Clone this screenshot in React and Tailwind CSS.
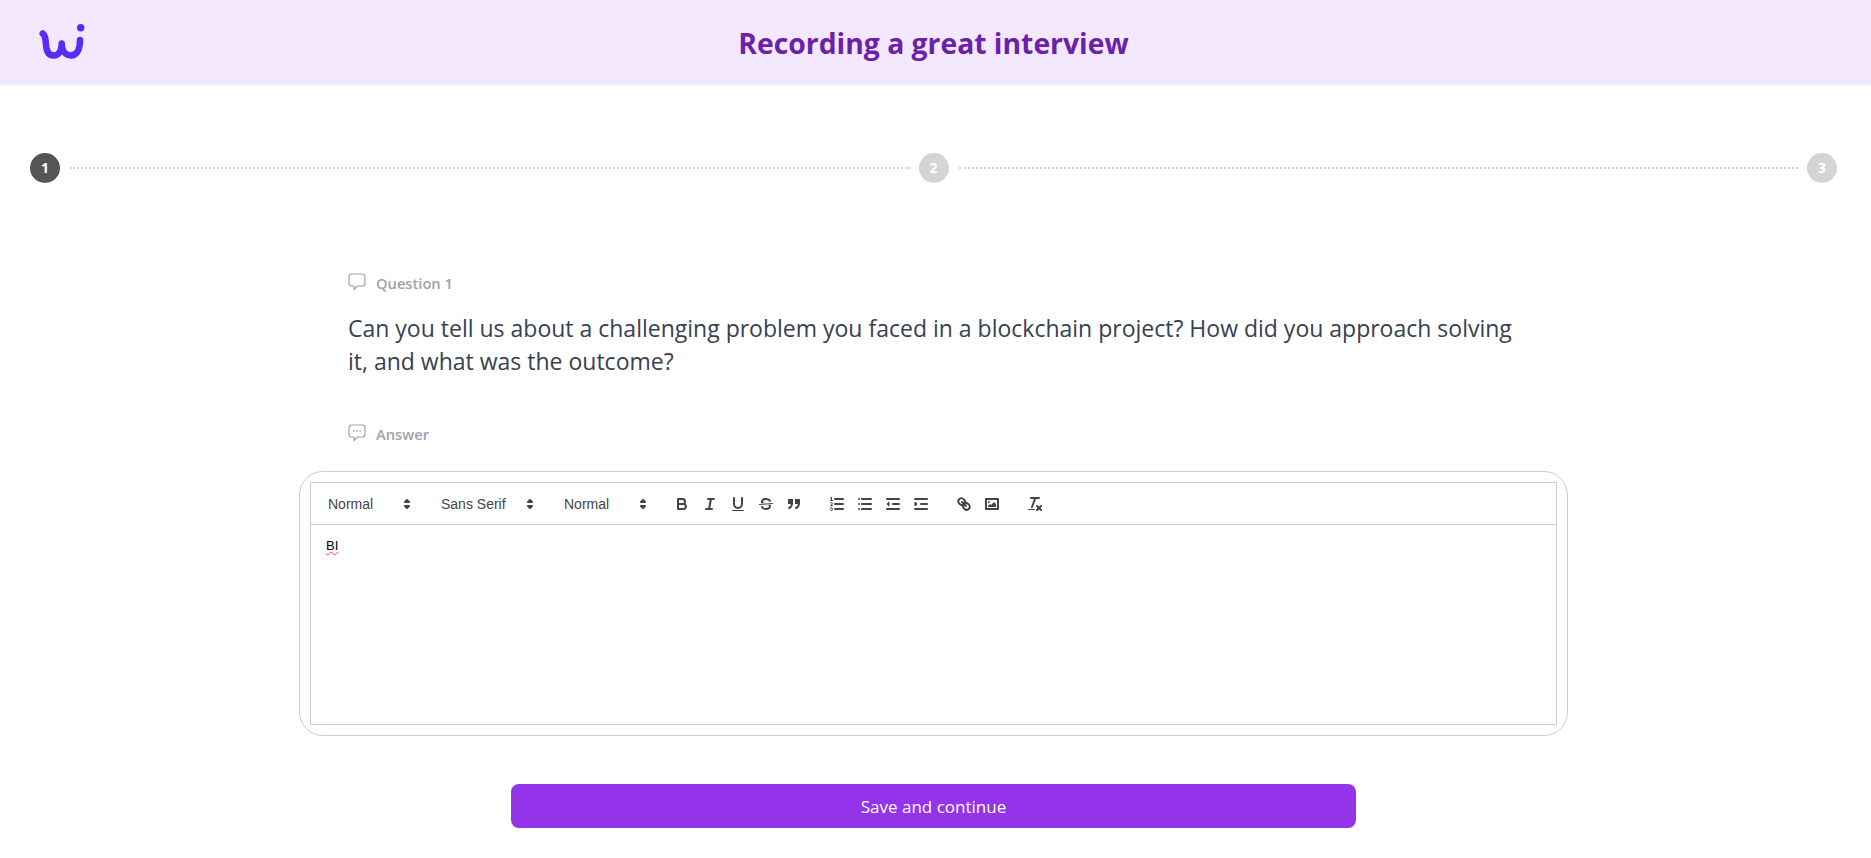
const ICON = 'fill-none stroke-[#444] stroke-2 [stroke-linecap:round] [stroke-linejoin:round]';
const THIN = 'fill-none stroke-[#444] stroke-1 [stroke-linecap:round] [stroke-linejoin:round]';
const FILL = 'fill-[#444]';

const TOOL_ICONS = {
  bold: (
    <>
      <path className={ICON} d="M5,4H9.5A2.5,2.5,0,0,1,12,6.5v0A2.5,2.5,0,0,1,9.5,9H5A0,0,0,0,1,5,9V4A0,0,0,0,1,5,4Z" />
      <path className={ICON} d="M5,9h5.5A2.5,2.5,0,0,1,13,11.5v0A2.5,2.5,0,0,1,10.5,14H5a0,0,0,0,1,0,0V9A0,0,0,0,1,5,9Z" />
    </>
  ),
  italic: (
    <>
      <line className={ICON} x1="7" x2="13" y1="4" y2="4" />
      <line className={ICON} x1="5" x2="11" y1="14" y2="14" />
      <line className={ICON} x1="8" x2="10" y1="14" y2="4" />
    </>
  ),
  underline: (
    <>
      <path className={ICON} d="M5,3V9a4.012,4.012,0,0,0,4,4H9a4.012,4.012,0,0,0,4-4V3" />
      <rect className={FILL} height="1" rx=".5" ry=".5" width="12" x="3" y="15" />
    </>
  ),
  strike: (
    <>
      <line className={THIN} x1="15.5" x2="2.5" y1="8.5" y2="9.5" />
      <path className={FILL} d="M9.007,8C6.542,7.791,6,7.519,6,6.5,6,5.792,7.283,5,9,5c1.571,0,2.765.679,2.969,1.309a1,1,0,0,0,1.9-.617C13.356,4.106,11.354,3,9,3,6.2,3,4,4.538,4,6.5a3.2,3.2,0,0,0,.5,1.843Z" />
      <path className={FILL} d="M8.984,10C11.457,10.208,12,10.479,12,11.5c0,.708-1.283,1.5-3,1.5-1.571,0-2.765-.679-2.969-1.309a1,1,0,1,0-1.9.617C4.644,13.894,6.646,15,9,15c2.8,0,5-1.538,5-3.5a3.2,3.2,0,0,0-.5-1.843Z" />
    </>
  ),
  blockquote: (
    <>
      <rect className="fill-[#444] stroke-[#444] stroke-2" height="3" width="3" x="4" y="5" />
      <rect className="fill-[#444] stroke-[#444] stroke-2" height="3" width="3" x="11" y="5" />
      <path className={ICON} d="M7,8c0,4.031-3,5-3,5" />
      <path className={ICON} d="M14,8c0,4.031-3,5-3,5" />
    </>
  ),
  ordered: (
    <>
      <line className={ICON} x1="7" x2="15" y1="4" y2="4" />
      <line className={ICON} x1="7" x2="15" y1="9" y2="9" />
      <line className={ICON} x1="7" x2="15" y1="14" y2="14" />
      <line className={THIN} x1="2.5" x2="4.5" y1="5.5" y2="5.5" />
      <path className={FILL} d="M3.5,6A0.5,0.5,0,0,1,3,5.5V3.085l-0.276.138A0.5,0.5,0,0,1,2.053,3c-0.124-.247-0.023-0.324.224-0.447l1-.5A0.5,0.5,0,0,1,4,2.5v3A0.5,0.5,0,0,1,3.5,6Z" />
      <path className={THIN} d="M4.5,10.5h-2c0-.234,1.85-1.076,1.85-2.234A0.959,0.959,0,0,0,2.5,8.156" />
      <path className={THIN} d="M2.5,14.846a0.959,0.959,0,0,0,1.85-.109A0.7,0.7,0,0,0,3.75,14a0.688,0.688,0,0,0,.6-0.736,0.959,0.959,0,0,0-1.85-.109" />
    </>
  ),
  bullet: (
    <>
      <line className={ICON} x1="6" x2="15" y1="4" y2="4" />
      <line className={ICON} x1="6" x2="15" y1="9" y2="9" />
      <line className={ICON} x1="6" x2="15" y1="14" y2="14" />
      <line className={ICON} x1="3" x2="3" y1="4" y2="4" />
      <line className={ICON} x1="3" x2="3" y1="9" y2="9" />
      <line className={ICON} x1="3" x2="3" y1="14" y2="14" />
    </>
  ),
  outdent: (
    <>
      <line className={ICON} x1="3" x2="15" y1="14" y2="14" />
      <line className={ICON} x1="3" x2="15" y1="4" y2="4" />
      <line className={ICON} x1="9" x2="15" y1="9" y2="9" />
      <polyline className="fill-[#444] stroke-[#444] stroke-1" points="5 7 5 11 3 9 5 7" />
    </>
  ),
  indent: (
    <>
      <line className={ICON} x1="3" x2="15" y1="14" y2="14" />
      <line className={ICON} x1="3" x2="15" y1="4" y2="4" />
      <line className={ICON} x1="9" x2="15" y1="9" y2="9" />
      <polyline className="fill-[#444] stroke-[#444] stroke-1" points="3 7 3 11 5 9 3 7" />
    </>
  ),
  link: (
    <>
      <line className={ICON} x1="7" x2="11" y1="7" y2="11" />
      <path className={ICON} d="M8.9,4.577a3.476,3.476,0,0,1,.36,4.679A3.476,3.476,0,0,1,4.577,8.9C3.185,7.5,2.035,6.4,4.217,4.217S7.5,3.185,8.9,4.577Z" />
      <path className={ICON} d="M13.423,9.1a3.476,3.476,0,0,0-4.679-.36,3.476,3.476,0,0,0,.36,4.679c1.392,1.392,2.5,2.542,4.679.36S14.815,10.5,13.423,9.1Z" />
    </>
  ),
  image: (
    <>
      <rect className={ICON} height="10" width="12" x="3" y="4" />
      <circle className={FILL} cx="6" cy="7" r="1" />
      <polyline className={FILL} points="5 12 5 11 7 9 8 10 11 7 13 9 13 12 5 12" />
    </>
  ),
  clean: (
    <>
      <line className={ICON} x1="5" x2="13" y1="3" y2="3" />
      <line className={ICON} x1="6" x2="9.35" y1="12" y2="3" />
      <line className={ICON} x1="11" x2="15" y1="11" y2="15" />
      <line className={ICON} x1="15" x2="11" y1="11" y2="15" />
      <rect className={FILL} height="1" rx="0.5" ry="0.5" width="7" x="2" y="14" />
    </>
  ),
};

const TOOL_GROUPS = [
  ['bold', 'italic', 'underline', 'strike', 'blockquote'],
  ['ordered', 'bullet', 'outdent', 'indent'],
  ['link', 'image'],
  ['clean'],
];

const Picker = ({ label, width }) => (
  <span className={`flex h-6 items-center justify-between pl-[9px] pr-px ${width} text-sm text-[#444]`}>
    {label}
    <svg viewBox="0 0 18 18" className="h-[18px] w-[18px]">
      <polygon className={ICON} points="7 11 9 13 11 11 7 11" />
      <polygon className={ICON} points="7 7 9 5 11 7 7 7" />
    </svg>
  </span>
);

const Step = ({ n, active }) => (
  <span
    className={`flex h-[30px] w-[30px] shrink-0 items-center justify-center rounded-full text-sm font-bold text-white ${
      active ? 'bg-[#555555]' : 'bg-[#d4d4d4]'
    }`}
  >
    {n}
  </span>
);

const Bubble = ({ dots }) => (
  <svg viewBox="0 0 18 18" className="mb-[3px] h-[18px] w-[18px] shrink-0 fill-none stroke-[#9ca3af]" strokeWidth="1.2">
    <path d="M3.500 1h11a2.500 2.500 0 0 1 2.500 2.500v7a2.500 2.500 0 0 1-2.500 2.500H9.500l-3.500 3.500v-3.500H3.500A2.500 2.500 0 0 1 1 10.500v-7A2.500 2.500 0 0 1 3.500 1Z" strokeLinejoin="round" />
    {dots && <path d="M5.500 7h.6M8.700 7h.6M11.900 7h.6" strokeLinecap="round" strokeWidth="1.400" />}
  </svg>
);

export default function App() {
  return (
    <div className="min-h-screen bg-white font-['Open_Sans',sans-serif]">
      <header className="relative flex h-[85px] items-center justify-center bg-[#f3e8ff] pr-1 pt-px">
        <svg viewBox="0 0 50 40" className="absolute left-[36px] top-[20px] h-10 w-[50px]">
          <path d="M6.700 13.500C9 15 9.500 18 10 25c.5 7 3 10.500 7.500 10.500 5.500 0 8.200-5.500 8.200-12 0 6.500 3.300 12 9.300 12 6 0 9-6.500 9-15.500" fill="none" stroke="#5b2bf5" strokeWidth="6.500" strokeLinecap="round" strokeLinejoin="round" />
          <circle cx="44.700" cy="7.700" r="3.700" fill="#5b2bf5" />
        </svg>
        <h1 className="text-[28.3px] font-bold text-[#6b21a8]">Recording a great interview</h1>
      </header>

      <div className="pr-1">
        <div className="flex items-center gap-[9px] px-[30px] pt-[68px]">
          <Step n="1" active />
          <span className="ml-px flex-1 border-t-2 border-dotted border-[#d4d4d4]" />
          <Step n="2" />
          <span className="ml-px flex-1 border-t-2 border-dotted border-[#d4d4d4]" />
          <Step n="3" />
        </div>

        <main className="mx-auto flex w-[1269px] flex-col pt-[91px]">
          <div className="pl-[49px] pr-[45px]">
            <div className="flex h-5 items-end gap-[10px]">
              <Bubble />
              <span className="text-[14.700px] font-semibold text-[#9ca3af]">Question 1</span>
            </div>
            <p className="mt-[18px] text-[23px] leading-[33px] text-[#374151]">
              Can you tell us about a challenging problem you faced in a blockchain project? How did you approach solving it, and what was the outcome?
            </p>
            <div className="mt-[47px] flex h-5 items-end gap-[10px]">
              <Bubble dots />
              <span className="text-[14.700px] font-semibold text-[#9ca3af]">Answer</span>
            </div>
          </div>

          <div className="mt-[26px] h-[265px] rounded-[24px] border border-[#cccccc] p-[10px]">
            <div className="flex h-full flex-col border border-[#cccccc] font-['Liberation_Sans',sans-serif]">
              <div className="flex items-center border-b border-[#cccccc] px-2 pb-2 pt-[9px]">
                <div className="mr-[15px] flex gap-[15px]">
                  <Picker label="Normal" width="w-[98px]" />
                  <Picker label="Sans Serif" width="w-[108px]" />
                  <Picker label="Normal" width="w-[98px]" />
                </div>
                {TOOL_GROUPS.map((group) => (
                  <div key={group[0]} className="mr-[15px] flex">
                    {group.map((name) => (
                      <span key={name} className="h-6 w-7 px-[5px] py-[3px]">
                        <svg viewBox="0 0 18 18" className="h-[18px] w-[18px]">
                          {TOOL_ICONS[name]}
                        </svg>
                      </span>
                    ))}
                  </div>
                ))}
              </div>
              <div className="flex-1 px-[15px] py-3 text-[13px] leading-[1.42] text-black">
                <span className="underline decoration-[#ef4444] decoration-wavy decoration-1">BI</span>
              </div>
            </div>
          </div>

          <button className="mx-auto mt-12 h-11 w-[845px] rounded-lg bg-[#9333ea] pt-px text-[17px] text-white">
            Save and continue
          </button>
        </main>
      </div>
    </div>
  );
}
